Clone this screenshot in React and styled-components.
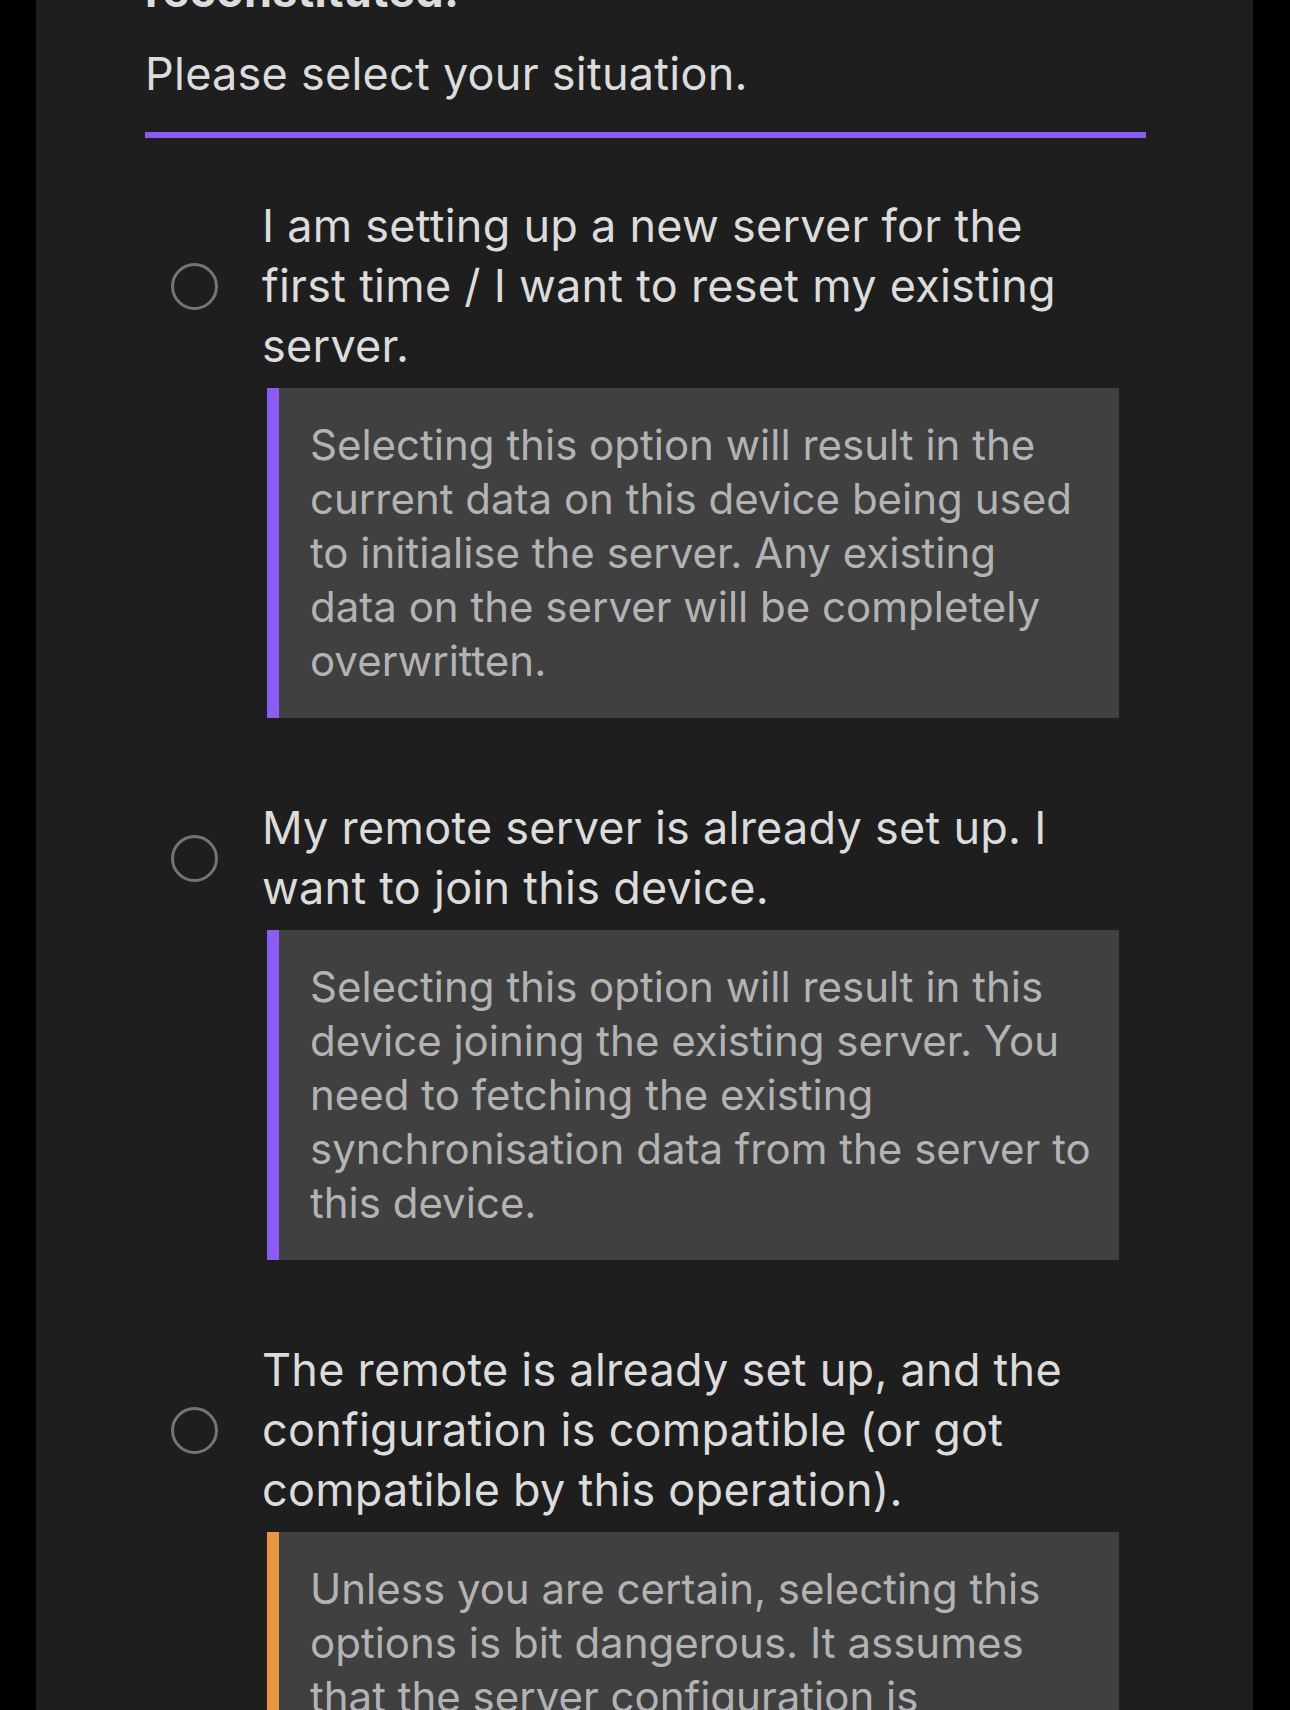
import React from 'react';
import styled, { createGlobalStyle } from 'styled-components';

const GlobalStyle = createGlobalStyle`
  html, body {
    margin: 0;
    padding: 0;
    background: #000;
  }
  body {
    font-family: 'Inter', 'Noto Sans', 'Liberation Sans', sans-serif;
    -webkit-font-smoothing: antialiased;
  }
`;

const Page = styled.div`
  height: 1710px;
  overflow: hidden;
  padding: 0 37px 0 36px;
  box-sizing: border-box;
`;

const Panel = styled.main`
  height: 100%;
  background: #1e1e1e;
  padding: 0 107px 0 109px;
  box-sizing: border-box;
  overflow: hidden;
`;

const Lead = styled.p`
  margin: -39px 0 0;
  font-size: 45px;
  line-height: 60px;
  font-weight: 700;
  letter-spacing: 0.25px;
  color: #dcdcdc;
`;

const Prompt = styled.p`
  margin: 23px 0 0;
  font-size: 45px;
  line-height: 60px;
  letter-spacing: 0.25px;
  color: #dcdcdc;
`;

const Rule = styled.hr`
  margin: 28px 0 0;
  height: 6px;
  border: none;
  background: #8a5cf5;
`;

const OptionList = styled.div`
  margin-top: 58px;
  padding-left: 26px;
  display: flex;
  flex-direction: column;
  gap: 80px;
`;

const Option = styled.div`
  display: flex;
  flex-direction: column;
  gap: 12px;
`;

const Choice = styled.label`
  display: flex;
  align-items: center;
  gap: 44px;
  padding-right: 56px;
  cursor: pointer;
`;

const Radio = styled.input.attrs({ type: 'radio' })`
  appearance: none;
  flex: none;
  margin: 0;
  width: 47px;
  height: 47px;
  border-radius: 50%;
  border: 3px solid #747474;
  box-sizing: border-box;
  background: transparent;
`;

const Label = styled.span`
  font-size: 45px;
  line-height: 60px;
  letter-spacing: 0.25px;
  color: #dcdcdc;
`;

const Note = styled.div`
  margin: 0 27px 0 96px;
  background: #404040;
  border-left: 12px solid ${(p) => (p.$tone === 'warning' ? '#e9973f' : '#8a5cf5')};
  padding: 30px 28px 30px 31px;
  font-size: 42px;
  line-height: 54px;
  color: #b3b3b3;
`;

const options = [
  {
    label: 'I am setting up a new server for the first time / I want to reset my existing server.',
    note: 'Selecting this option will result in the current data on this device being used to initialise the server. Any existing data on the server will be completely overwritten.',
    tone: 'info',
  },
  {
    label: 'My remote server is already set up. I want to join this device.',
    note: 'Selecting this option will result in this device joining the existing server. You need to fetching the existing synchronisation data from the server to this device.',
    tone: 'info',
  },
  {
    label: 'The remote is already set up, and the configuration is compatible (or got compatible by this operation).',
    note: 'Unless you are certain, selecting this options is bit dangerous. It assumes that the server configuration is compatible with this device. If this is not the case, data corruption may occur.',
    tone: 'warning',
  },
];

export default function App() {
  return (
    <>
      <GlobalStyle />
      <Page>
        <Panel>
          <Lead>reconstituted.</Lead>
          <Prompt>Please select your situation.</Prompt>
          <Rule />
          <OptionList>
            {options.map((o, i) => (
              <Option key={i}>
                <Choice>
                  <Radio name="situation" />
                  <Label>{o.label}</Label>
                </Choice>
                <Note $tone={o.tone}>{o.note}</Note>
              </Option>
            ))}
          </OptionList>
        </Panel>
      </Page>
    </>
  );
}
